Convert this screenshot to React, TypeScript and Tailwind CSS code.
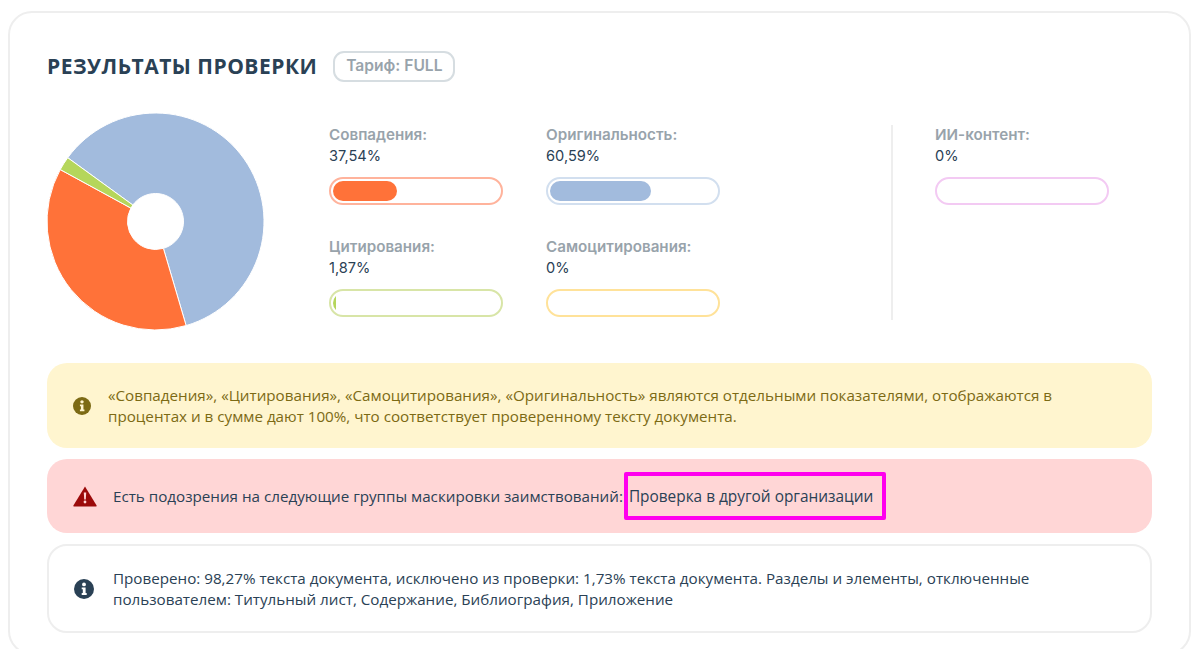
const slices = [
  { color: "#a2bbdd", from: 306, to: 523.6 },
  { color: "#ff7239", from: 163.6, to: 298.6 },
  { color: "#b5d65b", from: 298.6, to: 306 },
];

function point(deg: number, r: number) {
  const a = (deg * Math.PI) / 180;
  return `${(108.5 + r * Math.sin(a)).toFixed(2)} ${(108.5 - r * Math.cos(a)).toFixed(2)}`;
}

function slicePath(from: number, to: number) {
  const large = to - from > 180 ? 1 : 0;
  return `M${point(from, 28)} L${point(from, 108.5)} A108.5 108.5 0 ${large} 1 ${point(to, 108.5)} L${point(to, 28)} A28 28 0 ${large} 0 ${point(from, 28)} Z`;
}

function Pie() {
  return (
    <svg width="218" height="218" viewBox="0 0 218 218" className="shrink-0">
      {slices.map((s) => (
        <path key={s.color} d={slicePath(s.from, s.to)} fill={s.color} stroke="#fff" strokeWidth="1" />
      ))}
    </svg>
  );
}

function InfoIcon({ size, color, inner, className }: { size: number; color: string; inner: string; className: string }) {
  return (
    <svg width={size} height={size} viewBox="0 0 20 20" className={className}>
      <circle cx="10" cy="10" r="10" fill={color} />
      <circle cx="10" cy="5.4" r="1.9" fill={inner} />
      <path d="M7.7 8.4H11.6V14H12.7V15.9H7.7V14H8.8V10.3H7.7Z" fill={inner} />
    </svg>
  );
}

function WarnIcon() {
  return (
    <svg width="24" height="21" viewBox="0 0 24 21" className="mr-[16px] shrink-0">
      <path d="M12 0.5L23.6 19.6Q24 20.5 23 20.5H1Q0 20.5 0.4 19.6Z" fill="#9b0a0a" />
      <path d="M10.8 6.5H13.2L12.8 13.5H11.2Z" fill="#ffd6d6" />
      <circle cx="12" cy="16" r="1.4" fill="#ffd6d6" />
    </svg>
  );
}

function Stat({ label, value, fill, border, width }: { label: string; value: string; fill: string; border: string; width: number }) {
  return (
    <div className="w-[174px]">
      <div className="font-['Inter',sans-serif] text-[15.2px] leading-[21px] font-semibold text-[#98a3ab]">{label}</div>
      <div className="pt-px font-['Inter',sans-serif] text-[14.6px] leading-[21px] text-[#2a4155]">{value}</div>
      <div className="mt-[10px] h-[28px] rounded-full border-2 bg-white p-[2px]" style={{ borderColor: border }}>
        <div className="h-full overflow-hidden rounded-full">
          <div className="h-full rounded-r-full" style={{ width: `${width}%`, backgroundColor: fill }} />
        </div>
      </div>
    </div>
  );
}

export default function App() {
  return (
    <div className="h-[649px] overflow-hidden bg-white font-['Open_Sans',sans-serif]">
      <div className="mt-[11px] ml-[8px] w-[1183px] rounded-[24px] border-2 border-[#eeeeee] px-[37px] pt-[37px] pb-[20px]">
        <div className="flex h-[32px] items-center">
          <h2 className="pt-px text-[21px] font-bold tracking-[0.5px] text-[#2a4155] uppercase">Результаты проверки</h2>
          <span className="ml-[16px] flex h-[31px] w-[122px] items-center justify-center rounded-[11px] border-2 border-[#d6dde1] font-['Inter',sans-serif] text-[15.6px] font-semibold text-[#98a3ab]">
            Тариф: FULL
          </span>
        </div>

        <div className="mt-[31px] flex h-[219px]">
          <Pie />
          <div className="mt-[11px] ml-[64px] grid h-[196px] grid-cols-[174px_174px] content-start gap-x-[43px] gap-y-[31px]">
            <Stat label="Совпадения:" value="37,54%" fill="#ff7239" border="#ffb39c" width={38.5} />
            <Stat label="Оригинальность:" value="60,59%" fill="#a2bbdd" border="#d2dfef" width={60.6} />
            <Stat label="Цитирования:" value="1,87%" fill="#b5d65b" border="#d8e5a7" width={1.9} />
            <Stat label="Самоцитирования:" value="0%" fill="#ffe08a" border="#ffe299" width={0} />
          </div>
          <div className="mt-[12px] ml-[171px] h-[195px] w-[2px] bg-[#eeeeee]" />
          <div className="mt-[11px] ml-[42px]">
            <Stat label="ИИ-контент:" value="0%" fill="#f3c6f3" border="#f3caf3" width={0} />
          </div>
        </div>

        <div className="mt-[31px] flex h-[85px] w-[1105px] items-center rounded-[20px] bg-[#fff5cf] pr-[40px] pl-[26px] text-[15.2px] leading-[21px] text-[#7c6a14]">
          <InfoIcon size={18} color="#7c6a14" inner="#fff5cf" className="mr-[17px] shrink-0" />
          <p>«Совпадения», «Цитирования», «Самоцитирования», «Оригинальность» являются отдельными показателями, отображаются в процентах и в сумме дают 100%, что соответствует проверенному тексту документа.</p>
        </div>

        <div className="relative mt-[11px] flex h-[74px] w-[1105px] items-center rounded-[20px] bg-[#ffd6d6] pl-[26px] text-[15.2px] leading-[21px] text-[#2a4155]">
          <WarnIcon />
          <p>
            Есть подозрения на следующие группы маскировки заимствований: <span className="ml-[2px] text-[15.4px]">Проверка в другой организации</span>
          </p>
          <div className="absolute top-[13px] left-[577px] h-[48px] w-[262px] rounded-[2px] border-4 border-[#ff00ee]" />
        </div>

        <div className="mt-[11px] flex h-[89px] w-[1105px] items-center rounded-[20px] border-2 border-[#eeeeee] pr-[100px] pl-[25px] text-[15.2px] leading-[21px] text-[#2a4155]">
          <InfoIcon size={20} color="#2a4155" inner="#ffffff" className="mr-[19px] shrink-0" />
          <p>Проверено: 98,27% текста документа, исключено из проверки: 1,73% текста документа. Разделы и элементы, отключенные пользователем: Титульный лист, Содержание, Библиография, Приложение</p>
        </div>
      </div>
    </div>
  );
}
